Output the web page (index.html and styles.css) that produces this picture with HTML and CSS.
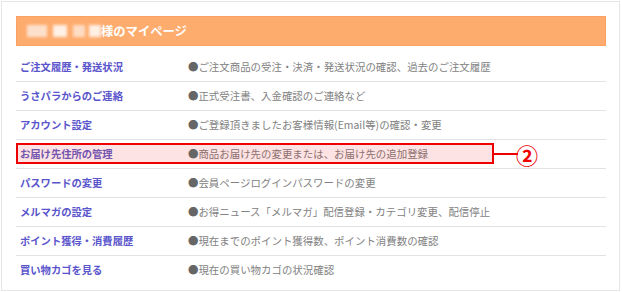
FILE: index.html
```html
<!DOCTYPE html>
<html lang="ja">
<head>
<meta charset="utf-8">
<title>マイページ</title>
<link rel="stylesheet" href="styles.css">
</head>
<body>
<div class="card">
  <div class="header">
    <span class="masked"><i class="m1"></i><i class="m2"></i><i class="m3"></i><i class="m4"></i></span>
    <span class="title">様のマイページ</span>
  </div>
  <ul class="menu">
    <li class="row"><a class="link">ご注文履歴・発送状況</a><span class="desc"><b class="dot">●</b>ご注文商品の受注・決済・発送状況の確認、過去のご注文履歴</span></li>
    <li class="row"><a class="link">うさパラからのご連絡</a><span class="desc"><b class="dot">●</b>正式受注書、入金確認のご連絡など</span></li>
    <li class="row"><a class="link">アカウント設定</a><span class="desc"><b class="dot">●</b>ご登録頂きましたお客様情報(Email等)の確認・変更</span></li>
    <li class="row highlight"><a class="link">お届け先住所の管理</a><span class="desc"><b class="dot">●</b>商品お届け先の変更または、お届け先の追加登録</span>
      <span class="mark"></span><span class="connector"></span><span class="num">②</span></li>
    <li class="row"><a class="link">パスワードの変更</a><span class="desc"><b class="dot">●</b>会員ページログインパスワードの変更</span></li>
    <li class="row"><a class="link">メルマガの設定</a><span class="desc"><b class="dot">●</b>お得ニュース「メルマガ」配信登録・カテゴリ変更、配信停止</span></li>
    <li class="row"><a class="link">ポイント獲得・消費履歴</a><span class="desc"><b class="dot">●</b>現在までのポイント獲得数、ポイント消費数の確認</span></li>
    <li class="row last"><a class="link">買い物カゴを見る</a><span class="desc"><b class="dot">●</b>現在の買い物カゴの状況確認</span></li>
  </ul>
</div>
</body>
</html>
```

FILE: styles.css
```css
html, body {
  margin: 0;
  padding: 0;
  background: #ffffff;
}
body {
  font-family: "Noto Sans CJK JP", "Noto Sans", sans-serif;
  width: 622px;
  height: 292px;
  overflow: hidden;
}
.card {
  margin: 1px;
  width: 590px;
  height: 274px;
  border: 1px solid #e6e6e6;
  padding: 14px 13px 0 14px;
}
.header {
  height: 28px;
  background: #feac6e;
  border: 1px solid #fba263;
  display: flex;
  align-items: center;
  padding-left: 10px;
}
.masked {
  display: flex;
  align-items: center;
  width: 74px;
  height: 16px;
  filter: blur(1.5px);
}
.masked i {
  display: block;
  height: 12px;
  background: #fee3cf;
}
.masked .m1 { width: 20px; background: #fde0cc; }
.masked .m2 { width: 14px; margin-left: 6px; background: #fff1e6; }
.masked .m3 { width: 12px; margin-left: 6px; background: #fddcc4; }
.masked .m4 { width: 12px; margin-left: 4px; background: #fff0e4; }
.title {
  color: #ffffff;
  font-weight: bold;
  font-size: 12.3px;
  line-height: 16px;
}
.menu {
  list-style: none;
  margin: 7px 0 0 0;
  padding: 0;
}
.row {
  position: relative;
  display: grid;
  grid-template-columns: 168px 1fr;
  align-items: center;
  height: 28px;
  padding-left: 4px;
  border-bottom: 1px solid #e2e2e2;
  font-size: 10.3px;
  line-height: 14px;
}
.row.last {
  border-bottom: none;
}
.link {
  color: #5a55cc;
  font-weight: bold;
  position: relative;
  z-index: 2;
}
.desc {
  color: #828282;
  font-size: 10.45px;
  position: relative;
  z-index: 2;
}
.dot {
  color: #666666;
  font-weight: normal;
}
.highlight .link { color: #7355b0; }
.highlight .desc { color: #8e7070; }
.mark {
  position: absolute;
  left: 0;
  top: 3px;
  width: 474px;
  height: 17px;
  border: 2px solid #ee0000;
  background: #fde3e3;
  z-index: 1;
}
.connector {
  position: absolute;
  left: 478px;
  top: 13px;
  width: 24px;
  height: 2px;
  background: #ee0000;
}
.num {
  position: absolute;
  left: 500px;
  top: 1px;
  color: #ee0000;
  font-size: 22px;
  font-weight: bold;
  line-height: 26px;
}
```
